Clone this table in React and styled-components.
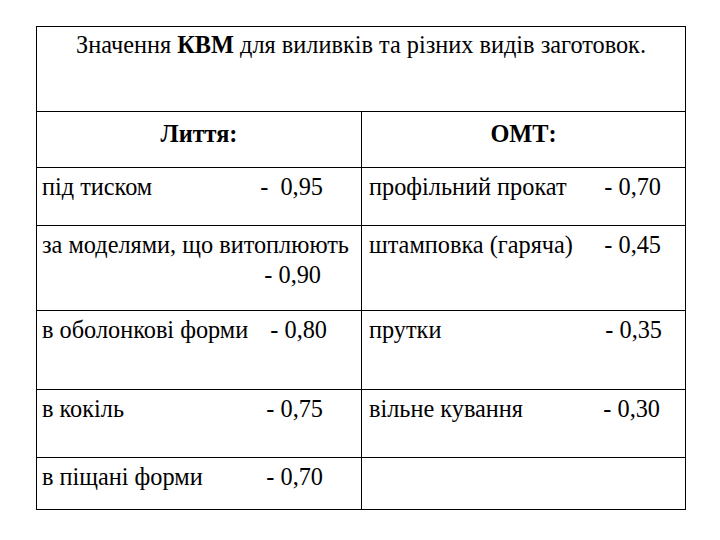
import styled, { createGlobalStyle } from 'styled-components';

const GlobalStyle = createGlobalStyle`
  html, body {
    margin: 0;
    padding: 0;
    background: #fff;
  }
  body {
    color: #000;
    font-family: 'Liberation Serif', 'Times New Roman', serif;
  }
`;

const Page = styled.div`
  width: 720px;
  height: 540px;
  padding: 26px 0 0 36px;
  box-sizing: border-box;
`;

const Table = styled.div`
  width: 649px;
  display: grid;
  grid-template-columns: 325px 324px;
  grid-template-rows: 85px 56px 58px 85px 79px 68px 52px;
  border-top: 1px solid #000;
  border-left: 1px solid #000;
  font-family: 'Liberation Serif', 'Times New Roman', serif;
  font-size: 24.3px;
`;

const Cell = styled.div`
  box-sizing: border-box;
  border-right: 1px solid #000;
  border-bottom: 1px solid #000;
  padding: ${(p) => p.$pad || '5px 0 0 5px'};
  grid-column: ${(p) => (p.$span ? '1 / 3' : 'auto')};
  text-align: ${(p) => p.$align || 'left'};
  font-weight: ${(p) => (p.$bold ? 700 : 400)};
  white-space: nowrap;
`;

const Line = styled.div`
  display: flex;
  justify-content: space-between;
  padding-right: ${(p) => p.$right}px;
`;

const Value = styled.span`
  white-space: pre;
`;

const Wrapped = styled.div`
  white-space: normal;
  line-height: 30px;
  margin-top: -1px;
`;

const ValueLine = styled.div`
  text-align: right;
  padding-right: ${(p) => p.$right}px;
`;

const left = [
  { label: 'під тиском', value: '-  0,95', right: 38 },
  null,
  { label: 'в оболонкові форми', value: '- 0,80', right: 34 },
  { label: 'в кокіль', value: '- 0,75', right: 38 },
  { label: 'в піщані форми', value: '- 0,70', right: 38 },
];

const right = [
  { label: 'профільний прокат', value: '- 0,70', right: 24 },
  { label: 'штамповка (гаряча)', value: '- 0,45', right: 24 },
  { label: 'прутки', value: '- 0,35', right: 23 },
  { label: 'вільне кування', value: '- 0,30', right: 25 },
  null,
];

export default function App() {
  return (
    <>
      <GlobalStyle />
      <Page>
        <Table>
          <Cell $span $align="center" $pad="4px 0 0 0">
            Значення <b>КВМ</b> для виливків та різних видів заготовок.
          </Cell>
          <Cell $align="center" $bold $pad="8px 0 0 0">Лиття:</Cell>
          <Cell $align="center" $bold $pad="8px 0 0 0">ОМТ:</Cell>
          {left.map((l, i) => {
            const r = right[i];
            return [
              <Cell key={`l${i}`}>
                {l ? (
                  <Line $right={l.right}>
                    <span>{l.label}</span>
                    <Value>{l.value}</Value>
                  </Line>
                ) : (
                  <Wrapped>
                    за моделями, що витоплюють
                    <ValueLine $right={40}>- 0,90</ValueLine>
                  </Wrapped>
                )}
              </Cell>,
              <Cell key={`r${i}`} $pad="5px 0 0 7px">
                {r && (
                  <Line $right={r.right}>
                    <span>{r.label}</span>
                    <Value>{r.value}</Value>
                  </Line>
                )}
              </Cell>,
            ];
          })}
        </Table>
      </Page>
    </>
  );
}
